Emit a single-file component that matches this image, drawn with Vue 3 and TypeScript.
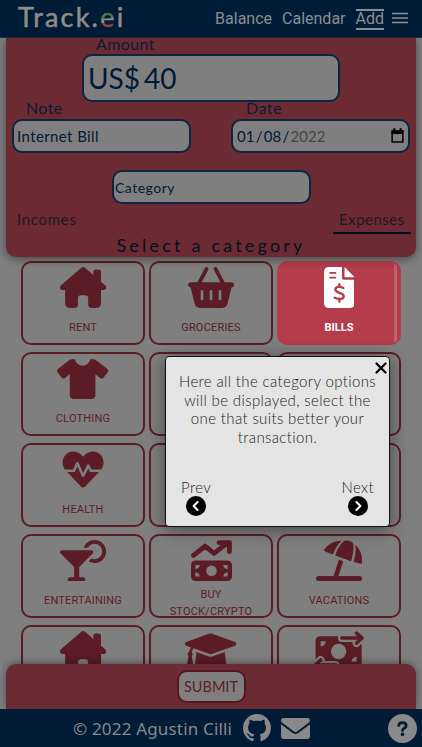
<script setup lang="ts">
interface Category {
  label: string
  icon: string
  box?: string
  active?: boolean
}

const categories: Category[] = [
  { label: 'RENT', icon: 'house' },
  { label: 'GROCERIES', icon: 'basket' },
  { label: 'BILLS', icon: 'invoice', box: '0 0 384 512', active: true },
  { label: 'CLOTHING', icon: 'shirt', box: '0 0 640 512' },
  { label: '', icon: '' },
  { label: '', icon: '' },
  { label: 'HEALTH', icon: 'heart' },
  { label: '', icon: '' },
  { label: '', icon: '' },
  { label: 'ENTERTAINING', icon: 'cocktail' },
  { label: 'BUY STOCK/CRYPTO', icon: 'trend', box: '0 0 512 512' },
  { label: 'VACATIONS', icon: 'beach' },
  { label: '', icon: 'house' },
  { label: '', icon: 'graduation', box: '0 0 640 512' },
  { label: '', icon: 'transfer', box: '0 0 640 512' },
]

const paths: Record<string, string> = {
  house:
    'M309 7L569 234Q576 242 576 256Q576 287 544 288H512V448Q512 512 448 512H400Q352 512 352 464V392Q352 352 312 352H264Q224 352 224 392V464Q224 512 176 512H128Q64 512 64 448V288H32Q0 287 0 256Q0 242 9 232L266 8Q288 -7 309 7ZM416 110V64Q416 32 448 32H480Q512 32 512 64V190Z',
  basket:
    'M171.7 191.1H404.3L322.7 35.07C316.6 23.31 321.2 8.821 332.9 2.672C344.7-3.477 359.2 1.093 365.3 12.85L458.4 191.1H544C561.7 191.1 576 206.2 576 223.1C576 241.7 561.7 255.1 544 255.1L492.1 463.5C484.1 492 459.4 512 430 512H145.1C116.6 512 91 492 83.88 463.5L32 255.1C14.33 255.1 0 241.7 0 223.1C0 206.2 14.33 191.1 32 191.1H117.6L210.7 12.85C216.8 1.093 231.3-3.477 243.1 2.672C254.8 8.821 259.4 23.31 253.3 35.07L171.7 191.1zM191.1 303.1C191.1 295.1 184.8 287.1 175.1 287.1C167.2 287.1 159.1 295.1 159.1 303.1V399.1C159.1 408.8 167.2 415.1 175.1 415.1C184.8 415.1 191.1 408.8 191.1 399.1V303.1zM271.1 303.1V399.1C271.1 408.8 279.2 415.1 287.1 415.1C296.8 415.1 304 408.8 304 399.1V303.1C304 295.1 296.8 287.1 287.1 287.1C279.2 287.1 271.1 295.1 271.1 303.1zM416 303.1C416 295.1 408.8 287.1 400 287.1C391.2 287.1 384 295.1 384 303.1V399.1C384 408.8 391.2 415.1 400 415.1C408.8 415.1 416 408.8 416 399.1V303.1z',
  invoice:
    'M0 64Q0 0 64 0H224V128Q224 160 256 160H384V448Q384 512 320 512H64Q0 512 0 448ZM256 0V128H384Z',
  shirt:
    'M640 162.8c0 6.917-2.293 13.88-7.012 19.7l-49.96 61.63c-6.32 7.796-15.62 11.85-25.01 11.85c-7.01 0-14.07-2.262-19.97-6.919L480 203.3V464c0 26.51-21.49 48-48 48H208C181.5 512 160 490.5 160 464V203.3L101.1 249.1C96.05 253.7 88.99 255.1 81.98 255.1c-9.388 0-18.69-4.057-25.01-11.85L7.012 182.5C2.292 176.7-.0003 169.7-.0003 162.8c0-9.262 4.111-18.44 12.01-24.68l135-106.6C159.8 21.49 175.7 16 191.1 16H225.6C233.3 61.36 272.5 96 320 96s86.73-34.64 94.39-80h33.6c16.35 0 32.22 5.49 44.99 15.57l135 106.6C635.9 144.4 640 153.6 640 162.8z',
  heart:
    'M352.4 243.8l-49.83 99.5c-6.009 12-23.41 11.62-28.92-.625L216.7 216.3l-30.05 71.75L88.55 288l176.4 182.2c12.66 13.07 33.36 13.07 46.03 0l176.4-182.2l-112.1 .0052L352.4 243.8zM495.2 62.86c-54.36-46.98-137.5-38.5-187.5 13.06L288 96.25L268.3 75.92C218.3 24.36 135.2 15.88 80.81 62.86C23.37 112.5 16.84 197.6 60.18 256h105l35.93-86.25c5.508-12.88 23.66-13.12 29.54-.375l58.21 129.4l49.07-98c5.884-11.75 22.78-11.75 28.67 0l27.67 55.25h121.5C559.2 197.6 552.7 112.5 495.2 62.86z',
  cocktail:
    'M288 464H240v-125.3l168.8-168.7C424.3 154.5 413.3 128 391.4 128H24.63C2.751 128-8.249 154.5 7.251 170l168.7 168.7V464H128c-17.67 0-32 14.33-32 32c0 8.836 7.164 16 15.1 16h191.1c8.836 0 15.1-7.164 15.1-16C320 478.3 305.7 464 288 464zM432 0c-62.63 0-115.4 40.25-135.1 96h52.5c16.62-28.5 47.25-48 82.62-48c52.88 0 95.1 43 95.1 96s-43.12 96-95.1 96c-14 0-27.25-3.25-39.37-8.625l-35.25 35.25c21.88 13.25 47.25 21.38 74.62 21.38c79.5 0 143.1-64.5 143.1-144S511.5 0 432 0z',
  trend:
    'M64 256H448Q512 256 512 320V448Q512 512 448 512H64Q0 512 0 448V320Q0 256 64 256Z',
  beach:
    'M104 118C150 50 230 5 320 8C270 50 240 110 212 180L112 144Q98 136 104 118ZM240 192C270 100 310 50 350 14C400 -5 450 20 465 50C475 110 460 200 438 264ZM490 60C550 110 582 190 574 280Q572 300 552 298L468 272C495 190 500 120 490 60ZM286 245L340 265L280 450H220ZM32 448H544A32 32 0 0 1 544 512H32A32 32 0 0 1 32 448Z',
  graduation:
    'M623.1 136.9l-282.7-101.2c-13.73-4.91-28.7-4.91-42.43 0L16.05 136.9C6.438 140.4 0 149.6 0 160s6.438 19.65 16.05 23.09L76.07 204.6c-11.89 15.8-20.26 34.16-24.55 53.95C40.05 263.4 32 274.8 32 288c0 9.953 4.814 18.49 11.94 24.36l-24.83 149C17.48 471.1 25 480 34.89 480H93.11c9.887 0 17.41-8.879 15.78-18.63l-24.83-149C91.19 306.5 96 297.1 96 288c0-10.29-5.174-19.03-12.72-24.89c4.252-17.76 12.88-33.82 24.94-47.03l190.6 68.23c13.73 4.91 28.7 4.91 42.43 0l282.7-101.2C633.6 179.6 640 170.4 640 160S633.6 140.4 623.1 136.9zM351.1 314.4C341.7 318.5 330.9 320 320 320c-10.92 0-21.69-1.562-32.02-5.25L142.5 262.8L128 405.3C128 446.6 213.1 480 320 480c105.1 0 192-33.4 192-74.67l-14.49-142.6L351.1 314.4z',
  transfer: 'M96 64H544Q608 64 608 128V384Q608 448 544 448H96Q32 448 32 384V128Q32 64 96 64Z',
}
</script>

<template>
  <div class="page">
    <header class="top">
      <div class="logo">
        <span>Track.</span><span class="logo-e">e</span><span>i</span>
      </div>
      <nav class="nav">
        <a>Balance</a>
        <a>Calendar</a>
        <a class="current">Add</a>
        <svg class="burger" viewBox="0 0 16 12"><path d="M0 1.5H16M0 6H16M0 10.5H16" /></svg>
      </nav>
    </header>

    <section class="form">
      <div class="amount">
        <label class="lbl amount-lbl">Amount</label>
        <div class="field amount-field"><span class="cur">US$</span><span>40</span></div>
      </div>
      <div class="pair">
        <div class="col">
          <label class="lbl note-lbl">Note</label>
          <div class="field small note">Internet Bill</div>
        </div>
        <div class="col">
          <label class="lbl date-lbl">Date</label>
          <div class="field small date">
            <span><span class="dd">01</span><span class="sl">/</span><span class="dd">08</span><span class="sl">/</span><span class="year">2022</span></span>
            <svg class="cal" viewBox="0 0 12 14"><path d="M1 3H11V13H1Z" fill="none" stroke="#000" stroke-width="1.4" /><path d="M.5 2H11.5V5.5H.5ZM2 .3H4V3H2ZM8 .3H10V3H8Z" /></svg>
          </div>
        </div>
      </div>
      <div class="field category">Category</div>
      <div class="tabs">
        <span class="tab inc">Incomes</span>
        <span class="tab on"><span class="exp">Expenses</span></span>
      </div>
      <h2 class="title">Select a category</h2>
    </section>

    <main class="area">
      <div class="grid">
        <div v-for="(c, i) in categories" :key="i" class="tile" :class="{ active: c.active }">
          <svg v-if="c.icon" class="icon" :viewBox="c.box || '0 0 576 512'">
            <path :d="paths[c.icon]" />
            <g v-if="c.icon === 'invoice'" class="cut-red">
              <path d="M76 74H144M76 134H144" stroke-width="22" />
              <path d="M242 262C200 240 142 242 142 282C142 330 246 315 246 364C246 405 185 406 134 384M192 214V248M192 396V432" stroke-width="30" />
            </g>
            <g v-if="c.icon === 'trend'">
              <path class="line" d="M32 192L176 76L288 168L462 30M350 32H480V146" />
              <circle class="hole" cx="256" cy="384" r="66" />
              <path class="hole" d="M54 312H110Q104 360 54 366ZM458 312H402Q408 360 458 366ZM54 456H110Q104 408 54 402ZM458 456H402Q408 408 458 402Z" />
            </g>
            <g v-if="c.icon === 'transfer'">
              <circle class="hole" cx="320" cy="256" r="96" />
              <path class="hole" d="M96 128H160Q156 188 96 192ZM544 384V320Q488 324 480 384Z" />
              <path class="gap" d="M360 88H612M544 26L612 88L544 150M280 424H28M96 362L28 424L96 486" />
              <path class="arrow" d="M360 88H612M544 26L612 88L544 150M280 424H28M96 362L28 424L96 486" />
            </g>
          </svg>
          <span class="name" :class="{ two: c.label.length > 13 }">{{ c.label }}</span>
        </div>
      </div>
    </main>

    <section class="bar"><button class="submit">SUBMIT</button></section>

    <footer class="foot">
      <span class="copy">© 2022 Agustin Cilli</span>
      <svg class="gh" viewBox="0 0 16 16"><path d="M8 0C3.58 0 0 3.58 0 8c0 3.54 2.29 6.53 5.47 7.59.4.07.55-.17.55-.38 0-.19-.01-.82-.01-1.49-2.01.37-2.53-.49-2.69-.94-.09-.23-.48-.94-.82-1.13-.28-.15-.68-.52-.01-.53.63-.01 1.08.58 1.23.82.72 1.21 1.87.87 2.33.66.07-.52.28-.87.51-1.07-1.78-.2-3.64-.89-3.64-3.95 0-.87.31-1.59.82-2.15-.08-.2-.36-1.02.08-2.12 0 0 .67-.21 2.2.82.64-.18 1.32-.27 2-.27s1.36.09 2 .27c1.53-1.04 2.2-.82 2.2-.82.44 1.1.16 1.92.08 2.12.51.56.82 1.27.82 2.15 0 3.07-1.87 3.75-3.65 3.95.29.25.54.73.54 1.48 0 1.07-.01 1.93-.01 2.2 0 .21.15.46.55.38A8.01 8.01 0 0 0 16 8c0-4.42-3.58-8-8-8z" /></svg>
      <svg class="mail" viewBox="0 0 29 21"><path d="M2.5 0H26.5Q29 0 29 2.6Q29 3.6 28 4.5L16 13.5Q14.5 14.5 13 13.5L1 4.5Q0 3.6 0 2.6Q0 0 2.5 0ZM0 6.2L12 15.2Q14.5 16.8 17 15.2L29 6.2V18.3Q29 21 26.3 21H2.7Q0 21 0 18.3Z" /></svg>
      <svg class="help" viewBox="0 0 29 29"><circle cx="14.5" cy="14.5" r="14.5" /><path class="q" d="M10.8 11.6Q10.8 8.7 14.4 8.7Q18.2 8.7 18.2 11.7Q18.2 13.4 16 14.4Q14.5 15.2 14.5 16.6" /><circle class="dot" cx="14.5" cy="20.4" r="1.8" /></svg>
    </footer>

    <aside class="tour">
      <svg class="close" viewBox="0 0 12 12"><path d="M1.5 1.5L10.5 10.5M10.5 1.5L1.5 10.5" /></svg>
      <p class="msg">
        <span>Here all the category options</span>
        <span>will be displayed, select the</span>
        <span>one that suits better your</span>
        <span>transaction.</span>
      </p>
      <div class="steps">
        <div class="step">
          <span>Prev</span>
          <svg class="disc" viewBox="0 0 20 20"><circle cx="10" cy="10" r="10" /><path d="M11.6 6L7.6 10L11.6 14" /></svg>
        </div>
        <div class="step">
          <span>Next</span>
          <svg class="disc" viewBox="0 0 20 20"><circle cx="10" cy="10" r="10" /><path d="M8.4 6L12.4 10L8.4 14" /></svg>
        </div>
      </div>
    </aside>
  </div>
</template>

<style>
body {
  margin: 0;
  overflow: hidden;
}
</style>

<style scoped>
* {
  box-sizing: border-box;
}
.page {
  position: relative;
  width: 422px;
  height: 747px;
  display: flex;
  flex-direction: column;
  overflow: hidden;
  background: #7f7f7f;
  font-family: Lato, 'Open Sans', sans-serif;
  font-variant-ligatures: none;
  white-space: nowrap;
}
.top {
  height: 38px;
  flex: none;
  display: flex;
  justify-content: space-between;
  padding: 0 14px 0 18px;
  background: #001c37;
  border-bottom: 1px solid #1c3143;
  color: #8b8e91;
}
.logo {
  font-size: 27px;
  line-height: 33px;
  letter-spacing: 2.2px;
  color: #8d8d8b;
  -webkit-text-stroke: 0.6px #8d8d8b;
  text-shadow: 0 0 2px #000;
}
.logo-e {
  background: linear-gradient(170deg, #507c43 54%, #8d8d8b 56% 64%, #963d46 66%);
  -webkit-background-clip: text;
  background-clip: text;
  color: transparent;
  -webkit-text-stroke: 0.5px transparent;
  text-shadow: none;
}
.nav {
  display: flex;
  gap: 10px;
  padding-top: 9px;
  font-family: Roboto, sans-serif;
  font-size: 16px;
  line-height: 19px;
}
.current {
  height: 21px;
  border-top: 2px solid #8b8e91;
  border-bottom: 2px solid #8b8e91;
  line-height: 16px;
}
.burger {
  width: 16px;
  height: 12px;
  margin: 3px 0 0 -2px;
  stroke: #8b8e91;
  stroke-width: 1.4;
}
.form {
  height: 219px;
  flex: none;
  position: relative;
  z-index: 1;
  margin: 0 6px;
  padding: 0 6px;
  display: flex;
  flex-direction: column;
  background: #6c2b33;
  border-radius: 0 0 10px 10px;
  box-shadow: 0 2px 10px rgba(0, 0, 0, 0.45);
  color: #071c38;
}
.lbl {
  display: block;
  font-size: 16px;
  height: 17px;
  line-height: 12px;
}
.field {
  background: #7f7f7f;
  border: 2px solid #0b2442;
  border-radius: 10px;
  display: flex;
  align-items: center;
  color: #001a38;
}
.amount {
  width: 258px;
  margin-left: 70px;
}
.amount-lbl {
  height: 16px;
  line-height: 12px;
  padding-left: 14px;
  letter-spacing: 0.4px;
}
.amount-field {
  height: 48px;
  padding-left: 4px;
  font-size: 28px;
  gap: 4px;
}
.pair {
  display: flex;
  justify-content: space-between;
}
.note-lbl {
  padding-left: 14px;
  letter-spacing: 0.4px;
}
.date-lbl {
  padding-left: 15px;
  letter-spacing: 0.5px;
}
.small {
  width: 179px;
  height: 34px;
  font-size: 15px;
}
.note {
  padding-left: 3px;
  padding-bottom: 1px;
  letter-spacing: 0.4px;
}
.date {
  padding: 0 4px 1px;
  justify-content: space-between;
}
.sl {
  margin: 0 1.3px;
}
.year {
  color: #454545;
}
.cal {
  width: 13px;
  height: 15px;
}
.category {
  width: 199px;
  height: 34px;
  margin: 17px 0 0 100px;
  padding-left: 1px;
  font-size: 14px;
  letter-spacing: 0.5px;
}
.tabs {
  display: flex;
  justify-content: space-between;
  padding-left: 5px;
  margin-top: 5px;
}
.tab {
  height: 25px;
  line-height: 20px;
  font-size: 15px;
  letter-spacing: 0.7px;
  color: #221629;
}
.on {
  width: 78px;
  margin-right: -1px;
  padding-left: 6px;
  letter-spacing: 0.5px;
  border-bottom: 2.5px solid #040f21;
}
.title {
  margin: 2px 0 0;
  font-size: 18px;
  font-weight: 400;
  line-height: 18px;
  text-align: center;
  letter-spacing: 3.2px;
  color: #03101f;
}
.area {
  flex: 1;
  min-height: 0;
  overflow: hidden;
  padding: 4px 0 0 21px;
}
.grid {
  display: grid;
  grid-template-columns: repeat(3, 124px);
  grid-auto-rows: 84px;
  gap: 7px 4px;
}
.tile {
  position: relative;
  border: 2px solid #5b1c25;
  border-radius: 10px;
  display: flex;
  flex-direction: column;
  align-items: center;
  padding-top: 4px;
  color: #5b1c25;
}
.icon {
  height: 41px;
  flex: none;
  fill: #5b1c25;
}
.name {
  margin-top: 11px;
  font-family: Roboto, sans-serif;
  font-size: 11px;
  font-weight: 400;
  line-height: 17px;
  letter-spacing: 0.2px;
  text-align: center;
}
.two {
  width: 90px;
  margin-top: 5px;
  white-space: normal;
}
.active {
  background: linear-gradient(90deg, transparent 117px, #c0626f 117px, #c0626f 120px, transparent 120px) -2px 0 no-repeat #b43c4b;
  border-color: #b43c4b;
  color: #fff;
}
.active .icon {
  fill: #fff;
}
.active .name {
  font-weight: 700;
  letter-spacing: 0;
}
.cut-red path {
  fill: none;
  stroke: #b43c4b;
  stroke-linecap: round;
}
.hole {
  fill: #7f7f7f;
}
.line,
.gap,
.arrow {
  fill: none;
  stroke: #5b1c25;
  stroke-width: 60;
  stroke-linecap: round;
  stroke-linejoin: round;
}
.gap {
  stroke: #7f7f7f;
  stroke-width: 100;
}
.arrow {
  stroke-width: 44;
}
.bar {
  position: relative;
  height: 45px;
  flex: none;
  margin: 0 6px;
  display: flex;
  justify-content: center;
  background: #6c2b33;
  border-radius: 10px 10px 0 0;
  box-shadow: 0 -1px 8px rgba(0, 0, 0, 0.4);
}
.submit {
  width: 69px;
  height: 33px;
  margin-top: 6px;
  padding: 0 0 1px;
  border: 2px solid #54161f;
  border-radius: 10px;
  background: #7f7f7f;
  color: #5b1c25;
  font: 14.5px Lato, sans-serif;
}
.foot {
  position: relative;
  height: 38px;
  flex: none;
  display: flex;
  align-items: center;
  padding-left: 73px;
  background: #001c37;
  fill: #898989;
}
.copy {
  width: 170px;
  font-family: 'Noto Sans', sans-serif;
  font-size: 17px;
  letter-spacing: 0.18px;
  color: #898989;
}
.gh {
  width: 28px;
  height: 28px;
}
.mail {
  width: 29px;
  height: 21px;
  margin-left: 10px;
}
.help {
  width: 29px;
  height: 29px;
  margin-left: 78px;
}
.q {
  fill: none;
  stroke: #001c37;
  stroke-width: 2.7;
  stroke-linecap: round;
}
.dot {
  fill: #001c37;
}
.tour {
  position: absolute;
  z-index: 2;
  left: 165px;
  top: 356px;
  width: 225px;
  height: 171px;
  background: #e4e4e4;
  border: 1px solid #111;
  border-radius: 4px;
  box-shadow: 0 3px 18px rgba(0, 0, 0, 0.45);
  color: #222;
  font-weight: 300;
  display: flex;
  flex-direction: column;
}
.close {
  width: 12px;
  height: 12px;
  margin: 5px 2px 0 auto;
  stroke: #000;
  stroke-width: 2.2;
  stroke-linecap: round;
}
.msg {
  margin: -2px 0 0;
  display: flex;
  flex-direction: column;
  align-items: center;
  font-size: 15px;
  line-height: 18.7px;
  letter-spacing: 0.36px;
}
.steps {
  display: flex;
  justify-content: space-between;
  margin-top: 31px;
  padding: 0 15px 0 15px;
}
.step {
  display: flex;
  flex-direction: column;
  align-items: center;
  font-size: 15px;
  line-height: 18px;
  letter-spacing: 0.4px;
}
.disc {
  width: 20px;
  height: 20px;
}
.disc path {
  fill: none;
  stroke: #fff;
  stroke-width: 2;
  stroke-linecap: round;
  stroke-linejoin: round;
}
</style>
